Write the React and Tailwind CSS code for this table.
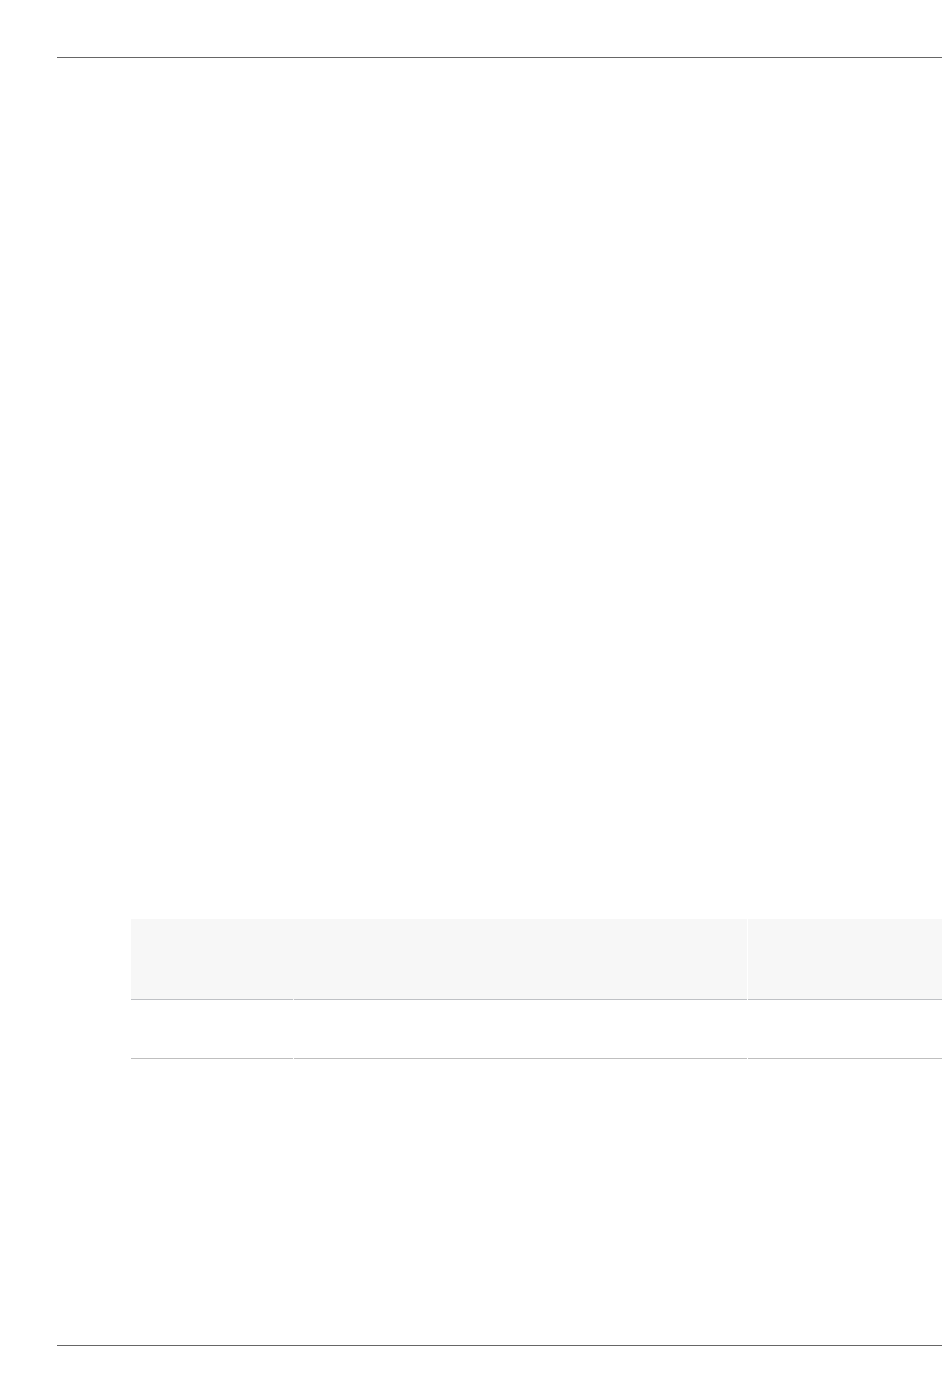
import React from "react";

const cols = "grid grid-cols-[162px_453px_194px] gap-x-px";

export default function App() {
  return (
    <div className="relative h-[1378px] w-[950px] bg-white font-['Liberation_Sans',sans-serif]">
      <div className="pt-[57px] pl-[57px] pr-[8px]">
        <div className="h-px bg-[#666666]" />
      </div>

      <div className="ml-[131px] mt-[861px] w-[811px]">
        <div className="grid grid-cols-[616px_194px] gap-x-px">
          <div className="grid grid-cols-[162px_453px] gap-x-px bg-[#f7f7f7]">
            <div className="h-[81px] border-b border-[#bfc1c5]" />
            <div className="h-[81px] border-b border-[#bfc1c5]" />
          </div>
          <div className="h-[81px] border-b border-[#bfc1c5] bg-[#f7f7f7]" />
        </div>
        <div className={cols}>
          <div className="h-[59px] border-b border-[#bfbfbf]" />
          <div className="h-[59px] border-b border-[#bfbfbf]" />
          <div className="h-[59px] border-b border-[#bfbfbf]" />
        </div>
      </div>

      <div className="mt-[286px] pl-[57px] pr-[8px]">
        <div className="h-px bg-[#666666]" />
      </div>
    </div>
  );
}
